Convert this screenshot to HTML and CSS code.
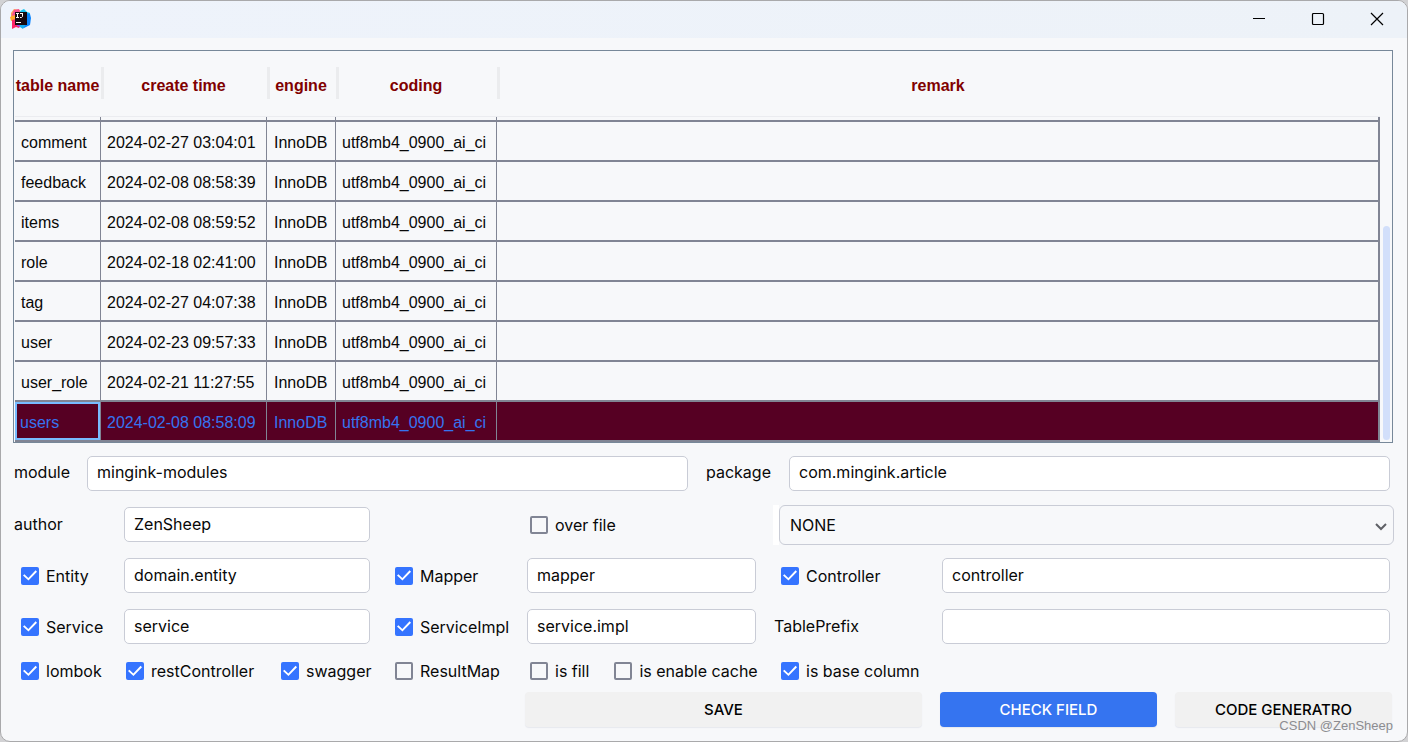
FILE: index.html
```html
<!DOCTYPE html>
<html lang="en">
<head>
<meta charset="utf-8">
<title>Code generator</title>
<link rel="stylesheet" href="styles.css">
</head>
<body>
<div class="window">
  <header class="titlebar">
    <svg class="app-icon" width="22" height="22" viewBox="0 0 22 22" aria-hidden="true">
      <path fill="#ff9a5c" d="M1 5 4 1l6 1-1 7-8 2z"/>
      <path fill="#f8518f" d="M4 2 9 1l2 7-6 4-3-5z"/>
      <path fill="#ffab2b" d="M0 9l5-2v5l-4 1z"/>
      <path fill="#ff2468" d="M2 12l4-1 5 6-2 3-3-1-4 2z"/>
      <path fill="#15c4f0" d="M10 3l4-2 3 3 3 1v6l-7 1z"/>
      <path fill="#0a84ff" d="M16 5l4 1 1 4-1 7-6 3-4-3z"/>
      <path fill="#8a4df0" d="M7 16h5l-1 3-4-1z"/>
      <path fill="#16aef0" d="M10 16h6l-3 5-3-2z"/>
      <rect x="5" y="4" width="12" height="13" fill="#160a10"/>
      <path stroke="#fff" fill="none" d="M6 5.500h3M7.500 5.500v4M6 9.500h3M10 5.500h3M12.500 5.500v3l-1 1H10M6 14.500h5"/>
    </svg>
    <div class="window-controls">
      <button type="button" aria-label="Minimize"><svg width="14" height="14" viewBox="0 0 14 14"><path d="M1 6.500h12"/></svg></button>
      <button type="button" aria-label="Maximize"><svg width="14" height="14" viewBox="0 0 14 14"><rect x="1.500" y="1.500" width="11" height="11" rx="1"/></svg></button>
      <button type="button" aria-label="Close"><svg width="14" height="14" viewBox="0 0 14 14"><path d="M1 1l12 12M13 1 1 13"/></svg></button>
    </div>
  </header>

  <div class="table-frame">
    <table class="tables">
      <colgroup><col class="c-name"><col class="c-time"><col class="c-engine"><col class="c-coding"><col></colgroup>
      <thead>
        <tr><th>table name</th><th>create time</th><th>engine</th><th>coding</th><th>remark</th></tr>
      </thead>
      <tbody>
        <tr class="cut" aria-hidden="true"><td></td><td></td><td></td><td></td><td></td></tr>
        <tr><td>comment</td><td>2024-02-27 03:04:01</td><td>InnoDB</td><td>utf8mb4_0900_ai_ci</td><td></td></tr>
        <tr><td>feedback</td><td>2024-02-08 08:58:39</td><td>InnoDB</td><td>utf8mb4_0900_ai_ci</td><td></td></tr>
        <tr><td>items</td><td>2024-02-08 08:59:52</td><td>InnoDB</td><td>utf8mb4_0900_ai_ci</td><td></td></tr>
        <tr><td>role</td><td>2024-02-18 02:41:00</td><td>InnoDB</td><td>utf8mb4_0900_ai_ci</td><td></td></tr>
        <tr><td>tag</td><td>2024-02-27 04:07:38</td><td>InnoDB</td><td>utf8mb4_0900_ai_ci</td><td></td></tr>
        <tr><td>user</td><td>2024-02-23 09:57:33</td><td>InnoDB</td><td>utf8mb4_0900_ai_ci</td><td></td></tr>
        <tr><td>user_role</td><td>2024-02-21 11:27:55</td><td>InnoDB</td><td>utf8mb4_0900_ai_ci</td><td></td></tr>
        <tr class="selected"><td class="focused">users</td><td>2024-02-08 08:58:09</td><td>InnoDB</td><td>utf8mb4_0900_ai_ci</td><td></td></tr>
      </tbody>
    </table>
    <div class="scrollbar"><div class="thumb"></div></div>
  </div>

  <form class="form">
    <div class="paths">
      <label class="text-label" for="module">module</label>
      <input class="field" id="module" type="text" value="mingink-modules">
      <label class="text-label package" for="package">package</label>
      <input class="field" id="package" type="text" value="com.mingink.article">
    </div>
    <div class="options">
      <label class="text-label" for="author">author</label>
      <input class="field" id="author" type="text" value="ZenSheep">
      <label class="check over"><input type="checkbox">over file</label>
      <div class="select-wrap">
        <select aria-label="Table rule"><option>NONE</option></select>
        <svg class="chevron" width="12" height="8" viewBox="0 0 12 8" aria-hidden="true"><path d="M1 1l5 5 5-5"/></svg>
      </div>

      <label class="check"><input type="checkbox" checked>Entity</label>
      <input class="field" type="text" aria-label="Entity package" value="domain.entity">
      <label class="check third"><input type="checkbox" checked>Mapper</label>
      <input class="field" type="text" aria-label="Mapper package" value="mapper">
      <label class="check fifth"><input type="checkbox" checked>Controller</label>
      <input class="field" type="text" aria-label="Controller package" value="controller">

      <label class="check"><input type="checkbox" checked>Service</label>
      <input class="field" type="text" aria-label="Service package" value="service">
      <label class="check third"><input type="checkbox" checked>ServiceImpl</label>
      <input class="field" type="text" aria-label="ServiceImpl package" value="service.impl">
      <label class="text-label prefix" for="prefix">TablePrefix</label>
      <input class="field" id="prefix" type="text">

      <div class="flags">
        <label class="check"><input type="checkbox" checked>lombok</label>
        <label class="check"><input type="checkbox" checked>restController</label>
        <label class="check"><input type="checkbox" checked>swagger</label>
      </div>
      <label class="check third"><input type="checkbox">ResultMap</label>
      <div class="fills">
        <label class="check"><input type="checkbox">is fill</label>
        <label class="check"><input type="checkbox">is enable cache</label>
      </div>
      <label class="check fifth"><input type="checkbox" checked>is base column</label>

      <button class="btn save" type="button">SAVE</button>
      <div class="actions">
        <button class="btn primary" type="button">CHECK FIELD</button>
        <button class="btn" type="button">CODE GENERATRO</button>
      </div>
    </div>
  </form>
  <div class="watermark">CSDN @ZenSheep</div>
</div>
</body>
</html>
```
FILE: styles.css
```css
* { box-sizing: border-box; }
body {
  margin: 0;
  background: #d2d2d4;
  color: #080808;
  font: 16px/20px Inter, "Liberation Sans", sans-serif;
}
button, input, select { font: inherit; color: inherit; }
.window {
  position: relative;
  min-height: 100vh;
  border: 1px solid #a9a9ab;
  border-radius: 10px;
  background: #f7f8fa;
  overflow: hidden;
}
.titlebar {
  display: flex;
  justify-content: space-between;
  align-items: center;
  height: 37px;
  padding: 0 1px 2px 9px;
  background: linear-gradient(90deg, #eef3fb, #edf2f8);
}
.window-controls { display: flex; }
.window-controls button {
  display: grid;
  place-items: center;
  width: 59px;
  height: 35px;
  padding: 0;
  border: 0;
  background: none;
}
.window-controls svg { fill: none; stroke: #000; stroke-width: 1.2; }

.table-frame {
  display: flex;
  margin: 12px 14px 0 12px;
  padding-left: 1px;
  border: 1px solid #778899;
}
.tables {
  flex: 1;
  table-layout: fixed;
  width: 0;
  border-collapse: separate;
  border-spacing: 0;
  font-family: "Liberation Sans", Arial, sans-serif;
}
.c-name { width: 86px; }
.c-time { width: 166px; }
.c-engine { width: 69px; }
.c-coding { width: 161px; }
.tables th {
  height: 66px;
  padding: 4px 1px 0 0;
  border-bottom: 1px solid #ebecf0;
  color: #800000;
  white-space: nowrap;
}
.tables th + th {
  background: linear-gradient(#ebecee, #ebecee) left 16px / 3px 32px no-repeat;
}
.tables td {
  height: 40px;
  padding: 4px 0 0 6px;
  border-right: 1px solid #818594;
  border-bottom: 2px solid #818594;
  white-space: nowrap;
}
.tables td:nth-child(3) { padding-left: 7px; }
.tables td:last-child { border-right-width: 2px; }
.tables .cut td { height: 5px; padding: 0; }
.tables .selected td { background: #560023; color: #3574f0; }
.tables .selected .focused { padding-left: 5px; box-shadow: inset 0 0 0 2px #78bbff; }
.scrollbar {
  display: flex;
  flex-direction: column;
  justify-content: flex-end;
  width: 12px;
  padding: 0 2px 2px 3px;
}
.thumb { height: 55%; border-radius: 4px; background: #d2dffa; }

.form { padding: 5px 0 12px; }
.paths {
  display: grid;
  grid-template-columns: 73px 1fr 101px 1fr;
  align-items: center;
  height: 50px;
  margin-bottom: 1px;
  padding: 0 17px 0 13px;
}
.text-label { padding-bottom: 2px; }
.package { padding-left: 18px; }
.options {
  display: grid;
  grid-template-columns: 110px 246fr 157px 229fr 186px 448fr;
  grid-template-rows: 51px 51px 51px 38px 38px;
  align-items: center;
  padding: 0 17px 0 13px;
}
.field {
  width: 100%;
  min-width: 0;
  height: 35px;
  padding: 0 9px 2px;
  border: 1px solid #c9ccd6;
  border-radius: 5px;
  background: #fff;
}
.check {
  display: flex;
  align-items: center;
  gap: 7px;
  padding-left: 7px;
  white-space: nowrap;
}
.check input {
  display: grid;
  place-items: center;
  flex: none;
  appearance: none;
  width: 18px;
  height: 18px;
  margin: 0;
  border: 2px solid #818594;
  border-radius: 2px;
}
.check input:checked { border: 0; background: #3574ff; }
.check input:checked::before {
  content: "";
  width: 14px;
  height: 12px;
  background: #fff;
  clip-path: polygon(0 50%, 10% 40%, 38% 70%, 90% 6%, 100% 18%, 39% 92%);
}
.third, .fifth { padding-left: 25px; }
.prefix { padding-left: 18px; }
.over { grid-column: 4; padding-left: 3px; }
.select-wrap {
  position: relative;
  grid-column: 5 / 7;
  margin: 0 -4px 0 17px;
  padding-left: 6px;
  background: linear-gradient(#fff, #fff) left / 6px 100% no-repeat;
}
.select-wrap select {
  display: block;
  appearance: none;
  width: 100%;
  height: 40px;
  padding: 0 10px;
  border: 1px solid #c9ccd6;
  border-radius: 6px;
  background: #f7f8fa;
}
.chevron {
  position: absolute;
  right: 7px;
  top: 18px;
  fill: none;
  stroke: #5f6166;
  stroke-width: 2;
  pointer-events: none;
}
.flags {
  display: grid;
  grid-template-columns: 105px 155px auto;
  grid-column: 1 / 3;
  min-width: 0;
}
.fills { display: flex; gap: 18px; min-width: 0; }
.fills .check:first-child { padding-left: 3px; }
.btn {
  height: 35px;
  padding: 2px 0 0;
  border: 0;
  border-radius: 4px;
  background: #f1f1f1;
  color: #000;
  font-size: 15px;
  font-weight: 500;
  box-shadow: 0 1px 1px #e6e8ee;
  white-space: nowrap;
}
.btn.primary { background: #3574f0; color: #fff; }
.save { grid-column: 4 / 6; margin: 0 20px 0 -2px; }
.actions {
  display: grid;
  grid-template-columns: 1fr 1fr;
  gap: 18px;
  margin: 0 -2px;
}
.watermark {
  position: absolute;
  right: 14px;
  bottom: 5px;
  color: #8c8c90;
  font: 13px/20px "Liberation Sans", Arial, sans-serif;
  pointer-events: none;
}
```
